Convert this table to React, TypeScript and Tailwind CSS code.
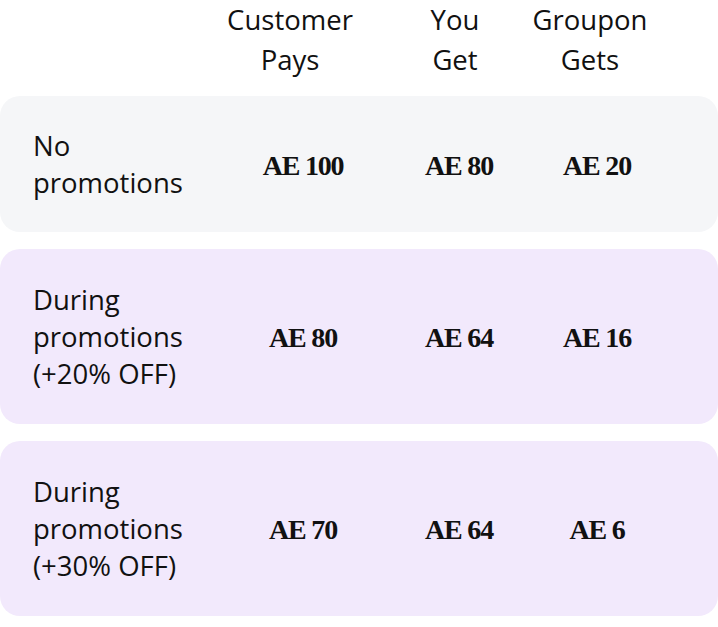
import React from "react";

const rows = [
  { label: ["No", "promotions"], vals: ["AE 100", "AE 80", "AE 20"], bg: "bg-[#f5f6f8]", py: "py-[31px]" },
  { label: ["During", "promotions", "(+20% OFF)"], vals: ["AE 80", "AE 64", "AE 16"], bg: "bg-[#f2e9fc]", py: "py-[32px]" },
  { label: ["During", "promotions", "(+30% OFF)"], vals: ["AE 70", "AE 64", "AE 6"], bg: "bg-[#f2e9fc]", py: "py-[32px]" },
];

export default function App() {
  return (
    <div className="w-[718px] h-[627px] bg-white text-[#111111] font-['Open_Sans',sans-serif]">
      <div className="flex text-[27.5px] leading-[40px]">
        <div className="w-[199px] shrink-0" />
        <div className="w-[182px] shrink-0 text-center">Customer<br />Pays</div>
        <div className="w-[148px] shrink-0 text-center">You<br />Get</div>
        <div className="w-[122px] shrink-0 text-center">Groupon<br />Gets</div>
      </div>
      <div className="mt-[16px] flex flex-col gap-[17px]">
        {rows.map((r, i) => (
          <div key={i} className={`flex items-center rounded-[20px] pl-[33px] ${r.bg} ${r.py}`}>
            <div className="w-[199px] shrink-0 text-[27.5px] leading-[37px]">
              {r.label.map((l, j) => (
                <div key={j}>{l}</div>
              ))}
            </div>
            {r.vals.map((v, j) => (
              <div
                key={j}
                className={`${j === 0 ? "w-[142px]" : j === 1 ? "w-[170px]" : "w-[106px]"} shrink-0 flex justify-center whitespace-nowrap pt-[3px] font-['Liberation_Serif',serif] font-bold text-[28px] tracking-[-1.2px]`}
              >
                {v}
              </div>
            ))}
          </div>
        ))}
      </div>
    </div>
  );
}
